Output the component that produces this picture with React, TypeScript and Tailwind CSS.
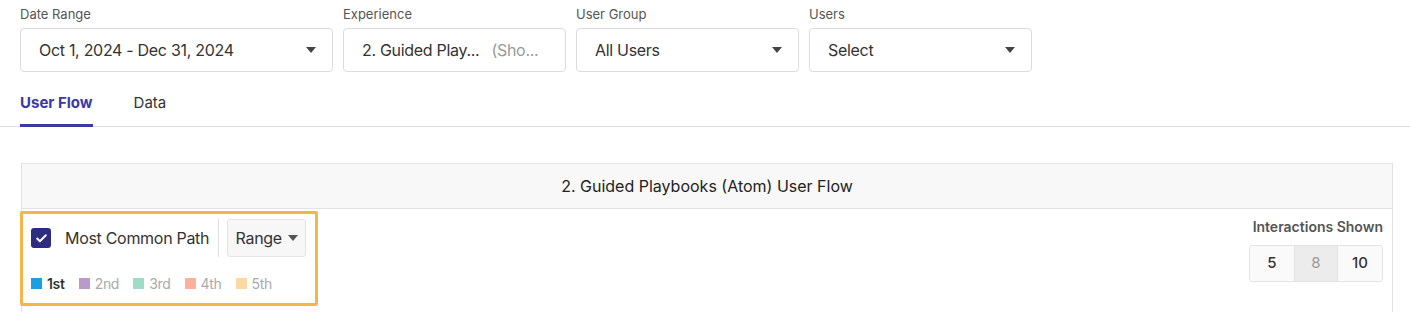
import { Check } from "lucide-react";

const filters = [
  { label: "Date Range", value: "Oct 1, 2024 - Dec 31, 2024", width: "w-[313px]", caret: true },
  { label: "Experience", value: "2. Guided Play...", hint: "(Sho...", width: "w-[223px]", caret: false },
  { label: "User Group", value: "All Users", width: "w-[223px]", caret: true },
  { label: "Users", value: "Select", width: "w-[223px]", caret: true },
];

const legend = [
  { name: "1st", color: "bg-[#1a9fe4]", active: true },
  { name: "2nd", color: "bg-[#b99ac8]", active: false },
  { name: "3rd", color: "bg-[#9ddcc5]", active: false },
  { name: "4th", color: "bg-[#fdb19c]", active: false },
  { name: "5th", color: "bg-[#fbd9a1]", active: false },
];

function Caret({ className = "" }: { className?: string }) {
  return (
    <svg width="10" height="6" viewBox="0 0 10 6" className={className}>
      <path d="M0 0h10L5 6z" fill="currentColor" />
    </svg>
  );
}

export default function App() {
  return (
    <div
      className="w-[1410px] h-[312px] bg-white overflow-hidden text-[#333]"
      style={{ fontFamily: "Inter, 'Noto Sans', sans-serif" }}
    >
      {/* Filters */}
      <div className="flex gap-[10px] px-5 pt-[5px]">
        {filters.map((f) => (
          <div key={f.label} className="flex flex-col">
            <span className="text-[13px] leading-[18px] text-[#555] mb-[5px]">{f.label}</span>
            <div
              className={`${f.width} h-[44px] rounded-[4px] border border-[#dcdcdc] flex items-center pl-[18px] pr-[16px] text-[16px] tracking-[-0.3px] text-[#333]`}
            >
              <span>{f.value}</span>
              {f.hint ? <span className="ml-[12px] text-[#999]">{f.hint}</span> : null}
              {f.caret ? <Caret className="ml-auto text-[#444]" /> : null}
            </div>
          </div>
        ))}
      </div>

      {/* Tabs */}
      <div className="mt-[16px] flex gap-[41px] px-5 border-b border-[#dedede] h-[39px]">
        <div className="relative text-[15px] font-bold text-[#3b3aa5] pt-[4px]">
          User Flow
          <div className="absolute left-0 right-0 bottom-[-1px] h-[3px] bg-[#3b3aa5]" />
        </div>
        <div className="text-[15px] text-[#333] pt-[4px]">Data</div>
      </div>

      {/* Panel */}
      <div className="mt-[36px] ml-[21px] mr-[17px] border border-[#e2e2e2] border-b-0 h-[160px]">
        <div className="h-[45px] bg-[#f8f8f8] border-b border-[#e2e2e2] flex items-center justify-center text-[16px] text-[#222]">
          2. Guided Playbooks (Atom) User Flow
        </div>
        <div className="flex justify-between">
          <div className="-ml-[2px] mt-[2px] w-[298px] h-[95px] border-[3px] border-[#f6b547] rounded-[2px] pl-[8px] pt-[5px]">
            <div className="flex items-center h-[38px]">
              <div className="w-[20px] h-[20px] rounded-[3px] bg-[#2d2c80] flex items-center justify-center">
                <Check size={13} strokeWidth={3.5} className="text-white" />
              </div>
              <span className="ml-[14px] text-[16px] tracking-[-0.3px] text-[#333]">Most Common Path</span>
              <div className="ml-[9px] w-px h-[38px] bg-[#e0e0e0]" />
              <div className="ml-[8px] w-[79px] h-[38px] rounded-[3px] border border-[#e3e3e3] bg-[#f7f7f7] flex items-center justify-center gap-[6px] text-[16px] tracking-[-0.3px] text-[#333]">
                Range
                <Caret className="text-[#555]" />
              </div>
            </div>
            <div className="flex items-center gap-[14px] mt-[16px]">
              {legend.map((l) => (
                <div key={l.name} className="flex items-center gap-[5px]">
                  <span className={`w-[11px] h-[11px] ${l.color}`} />
                  <span
                    className={`text-[14px] tracking-[-0.3px] ${l.active ? "font-semibold text-[#333]" : "text-[#aaa]"}`}
                  >
                    {l.name}
                  </span>
                </div>
              ))}
            </div>
          </div>
          <div className="mr-[9px] mt-[9px] flex flex-col items-end">
            <span className="text-[14px] font-semibold text-[#555] leading-[18px]">Interactions Shown</span>
            <div className="mt-[9px] flex h-[37px] border border-[#e3e3e3] rounded-[3px] overflow-hidden text-[15px]">
              <div className="w-[44px] flex items-center justify-center bg-[#fafafa] text-[#333] font-medium">5</div>
              <div className="w-[44px] flex items-center justify-center bg-[#ececec] text-[#999] border-x border-[#e3e3e3]">8</div>
              <div className="w-[44px] flex items-center justify-center bg-[#fafafa] text-[#333] font-medium">10</div>
            </div>
          </div>
        </div>
      </div>
    </div>
  );
}
